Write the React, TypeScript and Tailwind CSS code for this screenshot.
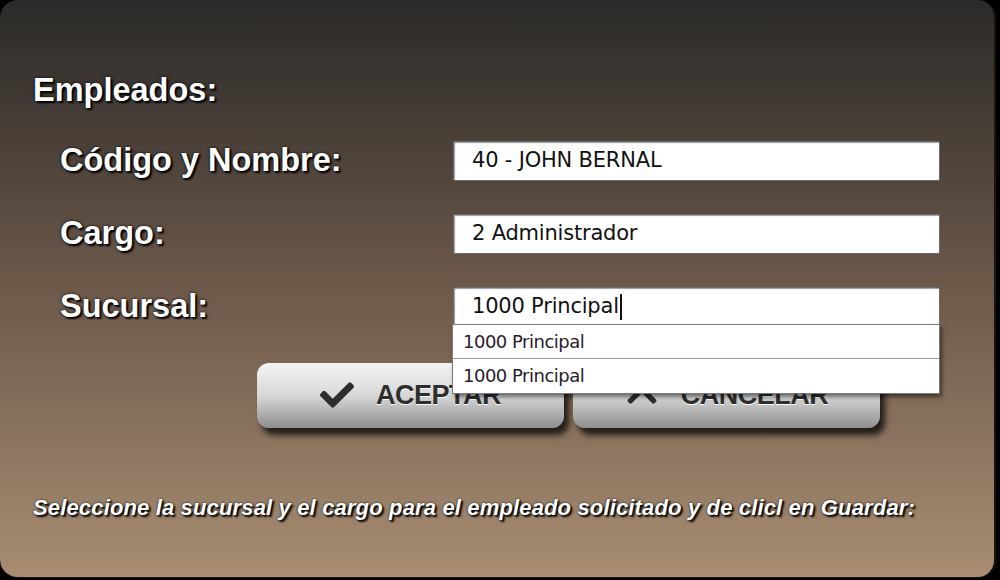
import { FaCheck, FaChevronUp } from "react-icons/fa";

const label =
  "font-['Liberation_Sans',Arial,sans-serif] font-bold text-white text-[32.5px] leading-none [text-shadow:2px_2px_2px_#000,0_0_3px_#000]";

const inputBox =
  "w-[487px] h-[40px] bg-white border border-[#6b6b6b] shadow-[inset_1px_1px_1px_#999] rounded-[2px] flex items-center pl-[18px] text-[21px] text-[#111] font-['DejaVu_Sans',Tahoma,sans-serif] tracking-[-0.2px]";

function Field({ name, value, caret }: { name: string; value: string; caret?: boolean }) {
  return (
    <div className="flex items-center">
      <div className={`${label} w-[393px]`}>{name}</div>
      <div className={inputBox}>
        <span>{value}</span>
        {caret && <span className="w-[2px] h-[26px] bg-[#111] ml-[1px]" />}
      </div>
    </div>
  );
}

function Btn({ icon, text }: { icon: React.ReactNode; text: string }) {
  return (
    <div className="w-[307px] h-[65px] rounded-[12px] bg-linear-to-b from-[#f4f4f4] via-[#d8d8d8] to-[#8f8f8f] shadow-[5px_7px_6px_rgba(0,0,0,0.75)] flex items-center justify-center gap-[22px] text-[#2e2e2e]">
      {icon}
      <span className="font-['Liberation_Sans',Arial,sans-serif] font-bold text-[27px] tracking-[-0.5px] [text-shadow:0_1px_0_#fff]">
        {text}
      </span>
    </div>
  );
}

export default function App() {
  const rows = ["1000 Principal", "1000 Principal"];
  return (
    <div className="w-[1000px] h-[580px] bg-black overflow-hidden">
      <div className="w-[996px] h-[578px] rounded-[18px] border-r-2 border-b border-[#1a1410] bg-linear-to-b from-[#2b2a28] via-[#6d594a] to-[#a88d72] pt-[74px] pl-[33px] relative">
        <div className={label}>Empleados:</div>

        <div className="pl-[27px] mt-[34px] flex flex-col gap-[33px]">
          <Field name="Código y Nombre:" value="40 - JOHN BERNAL" />
          <Field name="Cargo:" value="2 Administrador" />
          <div className="relative">
            <Field name="Sucursal:" value="1000 Principal" caret />
            <div className="absolute left-[392px] top-[37px] w-[488px] bg-white border border-[#7a7a7a] shadow-[2px_3px_4px_rgba(0,0,0,0.5)] z-10">
              {rows.map((r, i) => (
                <div
                  key={i}
                  className={`h-[34px] flex items-center pl-[10px] text-[18px] text-[#2a1a2a] font-['DejaVu_Sans',Tahoma,sans-serif] tracking-[-0.5px] ${
                    i === 0 ? "border-b border-[#9a9a9a]" : ""
                  }`}
                >
                  {r}
                </div>
              ))}
            </div>
          </div>
        </div>

        <div className="flex gap-[9px] ml-[224px] mt-[36px]">
          <Btn icon={<FaCheck className="text-[34px]" />} text="ACEPTAR" />
          <Btn icon={<FaChevronUp className="text-[34px]" />} text="CANCELAR" />
        </div>

        <div className="mt-[69px] font-['Liberation_Sans',Arial,sans-serif] font-bold italic text-white text-[22px] leading-none tracking-[0.15px] [text-shadow:2px_2px_2px_#000,0_0_2px_#000]">
          Seleccione la sucursal y el cargo para el empleado solicitado y de clicl en Guardar:
        </div>
      </div>
    </div>
  );
}
